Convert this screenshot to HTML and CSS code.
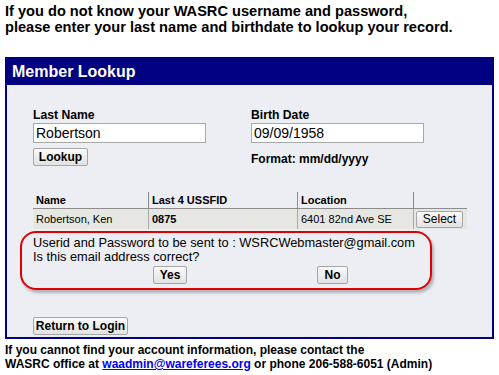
FILE: index.html
```html
<!DOCTYPE html>
<html>
<head>
<meta charset="utf-8">
<link rel="stylesheet" href="styles.css">
</head>
<body>
<p class="intro">If you do not know your WASRC username and password,<br>please enter your last name and birthdate to lookup your record.</p>
<div class="panel">
  <div class="panel-title">Member Lookup</div>
  <div class="panel-body">
    <div class="fields">
      <div class="field">
        <label class="lbl">Last Name</label>
        <input class="txt" type="text" value="Robertson">
        <button class="btn btn-lookup">Lookup</button>
      </div>
      <div class="field">
        <label class="lbl">Birth Date</label>
        <input class="txt" type="text" value="09/09/1958">
        <div class="fmt">Format: mm/dd/yyyy</div>
      </div>
    </div>
    <table class="results">
      <tr class="hdr">
        <th class="c1">Name</th>
        <th class="c2">Last 4 USSFID</th>
        <th class="c3">Location</th>
        <th class="c4"></th>
      </tr>
      <tr class="row">
        <td>Robertson, Ken</td>
        <td class="bold">0875</td>
        <td>6401 82nd Ave SE</td>
        <td class="sel"><button class="btn btn-select">Select</button></td>
      </tr>
    </table>
    <div class="confirm">
      <div class="msg">Userid and Password to be sent to : WSRCWebmaster@gmail.com</div>
      <div class="msg">Is this email address correct?</div>
      <div class="yn">
        <button class="btn btn-yes">Yes</button>
        <button class="btn btn-no">No</button>
      </div>
    </div>
    <button class="btn btn-return">Return to Login</button>
  </div>
</div>
<p class="footer">If you cannot find your account information, please contact the<br>WASRC office at <a href="#">waadmin@wareferees.org</a> or phone 206-588-6051 (Admin)</p>
</body>
</html>
```
FILE: styles.css
```css
html, body { margin: 0; padding: 0; background: #fff; }
body { font-family: "Liberation Sans", Arial, sans-serif; color: #000; padding: 0 5px; }
.intro { margin: 0; padding-top: 3px; font-size: 14.6px; font-weight: bold; line-height: 16px; }
.panel { margin-top: 22px; width: 485px; border: 2px solid #000080; background: #eceef4; }
.panel-title { background: #000080; color: #fff; font-weight: bold; font-size: 16px; height: 26px; line-height: 26px; padding-left: 5px; }
.panel-body { padding: 22px 0 2px 26px; }
.fields { display: flex; }
.field { width: 218px; display: flex; flex-direction: column; align-items: flex-start; }
.lbl { font-size: 12.2px; font-weight: bold; line-height: 16px; }
.txt { margin: 0; width: 173px; height: 20px; box-sizing: border-box; border: 1px solid #a9a9a9; background: #fff; font-family: "Liberation Sans", Arial, sans-serif; font-size: 14px; padding: 0 2px; color: #000; }
.btn { margin: 0; font-family: "Liberation Sans", Arial, sans-serif; font-size: 12px; font-weight: bold; color: #000; background: linear-gradient(#fafafa, #e2e2e2); border: 1px solid #a6a6a6; border-radius: 2px; padding: 0; box-sizing: border-box; height: 18px; line-height: 15px; }
.btn-lookup { margin-top: 5px; width: 55px; }
.fmt { margin-top: 9px; font-size: 12px; font-weight: bold; }
.results { margin-top: 26px; border-collapse: collapse; width: 434px; font-size: 11px; }
.results th { text-align: left; font-weight: bold; height: 16px; padding: 0 3px; border-left: 1px solid #8c8c8c; border-bottom: 1px solid #8c8c8c; vertical-align: middle; }
.results th.c1 { border-left: none; width: 109px; }
.results th.c2 { width: 142px; }
.results th.c3 { width: 109px; }
.results .row { background: #e6e6e2; }
.results td { height: 20px; padding: 0 3px; border-left: 1px solid #a8a8a8; vertical-align: middle; }
.results td:first-child { border-left: none; }
.results td.bold { font-weight: bold; }
.results td.sel { padding: 0 3px 0 2px; }
.btn-select { width: 47px; height: 17px; font-weight: normal; font-size: 12px; }
.confirm { margin: 2px 0 0 -13px; width: 412px; height: 59px; box-sizing: border-box; border: 2px solid #e00000; border-radius: 16px; box-shadow: 2px 3px 3px rgba(0,0,0,0.25); padding: 3px 0 0 11px; }
.msg { font-size: 12.8px; line-height: 14px; }
.yn { display: flex; padding-left: 120px; margin-top: 2px; }
.btn-yes { width: 34px; }
.btn-no { width: 31px; margin-left: 130px; }
.btn-return { margin-top: 27px; width: 95px; }
.footer { margin: 4px 0 0; font-size: 12px; font-weight: bold; line-height: 14px; }
.footer a { color: #0000ee; }
```
